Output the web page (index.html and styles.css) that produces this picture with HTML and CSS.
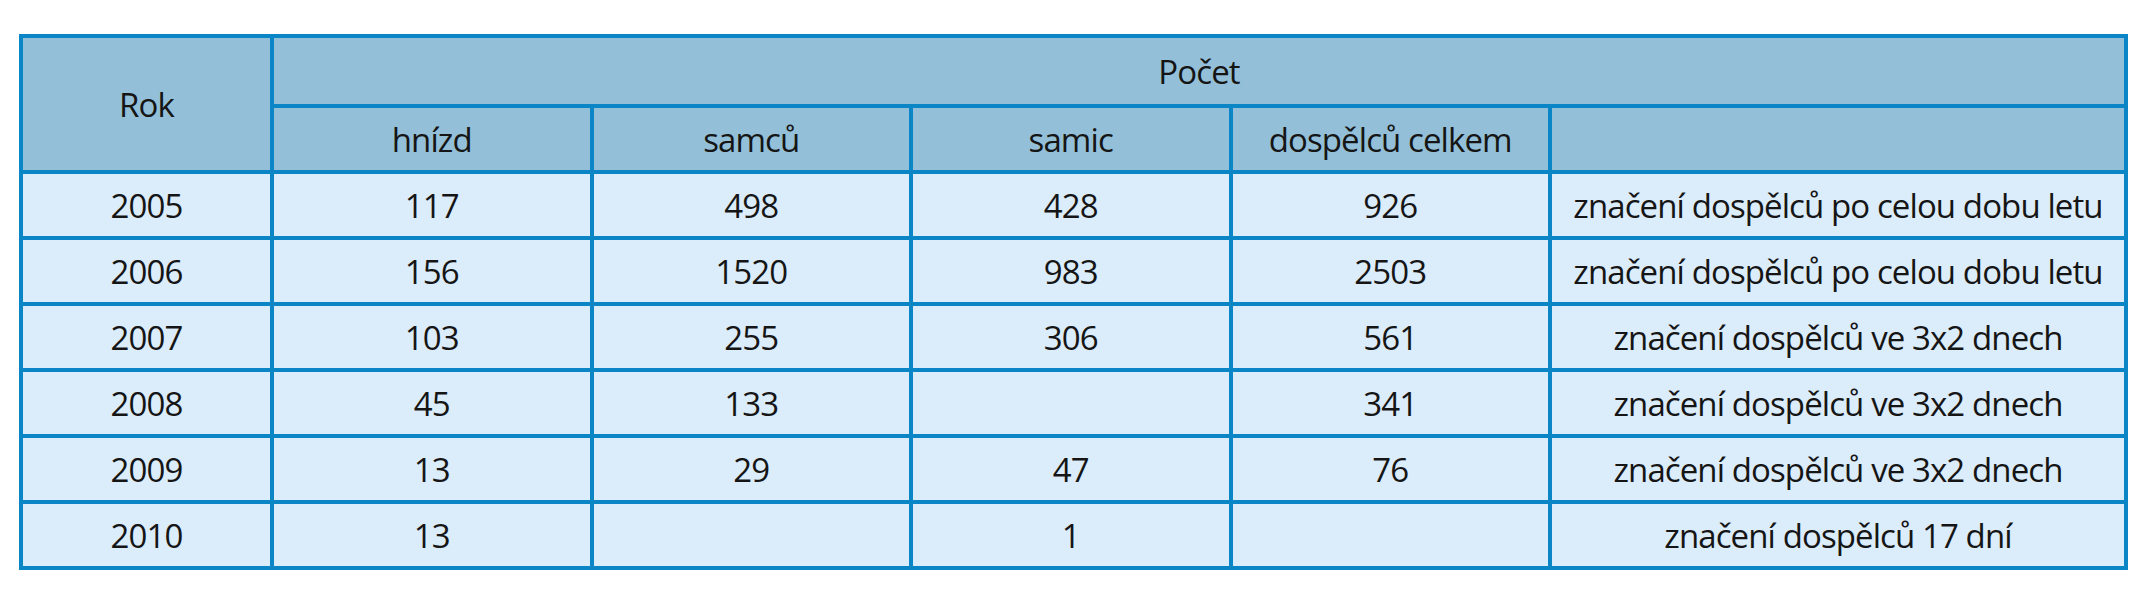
FILE: index.html
```html
<!DOCTYPE html>
<html lang="cs">
<head>
<meta charset="utf-8">
<title>Počet</title>
<link rel="stylesheet" href="styles.css">
</head>
<body>
<table class="data">
  <colgroup>
    <col class="c-rok">
    <col class="c-num">
    <col class="c-num">
    <col class="c-num">
    <col class="c-num">
    <col class="c-note">
  </colgroup>
  <thead>
    <tr class="h1">
      <th rowspan="2">Rok</th>
      <th colspan="5">Počet</th>
    </tr>
    <tr class="h2">
      <th>hnízd</th>
      <th>samců</th>
      <th>samic</th>
      <th>dospělců celkem</th>
      <th></th>
    </tr>
  </thead>
  <tbody>
    <tr><td>2005</td><td>117</td><td>498</td><td>428</td><td>926</td><td>značení dospělců po celou dobu letu</td></tr>
    <tr><td>2006</td><td>156</td><td>1520</td><td>983</td><td>2503</td><td>značení dospělců po celou dobu letu</td></tr>
    <tr><td>2007</td><td>103</td><td>255</td><td>306</td><td>561</td><td>značení dospělců ve 3x2 dnech</td></tr>
    <tr><td>2008</td><td>45</td><td>133</td><td></td><td>341</td><td>značení dospělců ve 3x2 dnech</td></tr>
    <tr><td>2009</td><td>13</td><td>29</td><td>47</td><td>76</td><td>značení dospělců ve 3x2 dnech</td></tr>
    <tr><td>2010</td><td>13</td><td></td><td>1</td><td></td><td>značení dospělců 17 dní</td></tr>
  </tbody>
</table>
</body>
</html>
```

FILE: styles.css
```css
html, body {
  margin: 0;
  padding: 0;
  background: #ffffff;
}

.data {
  border-collapse: collapse;
  table-layout: fixed;
  width: 2105px;
  margin: 34px 0 0 19px;
  font-family: "Open Sans", "Noto Sans", sans-serif;
  font-size: 33px;
  color: #151515;
}

.c-rok { width: 251px; }
.c-num { width: 319.5px; }
.c-note { width: 576px; }

.data th,
.data td {
  border: 4px solid #0a86c6;
  padding: 0;
  text-align: center;
  vertical-align: middle;
  font-weight: 400;
  white-space: nowrap;
  letter-spacing: -0.9px;
}

.data th {
  background: #93c0d8;
}

.data td {
  background: #dbecfa;
}

.h1 { height: 70px; }
.h2 { height: 66px; }
.data tbody tr { height: 66px; }
```
